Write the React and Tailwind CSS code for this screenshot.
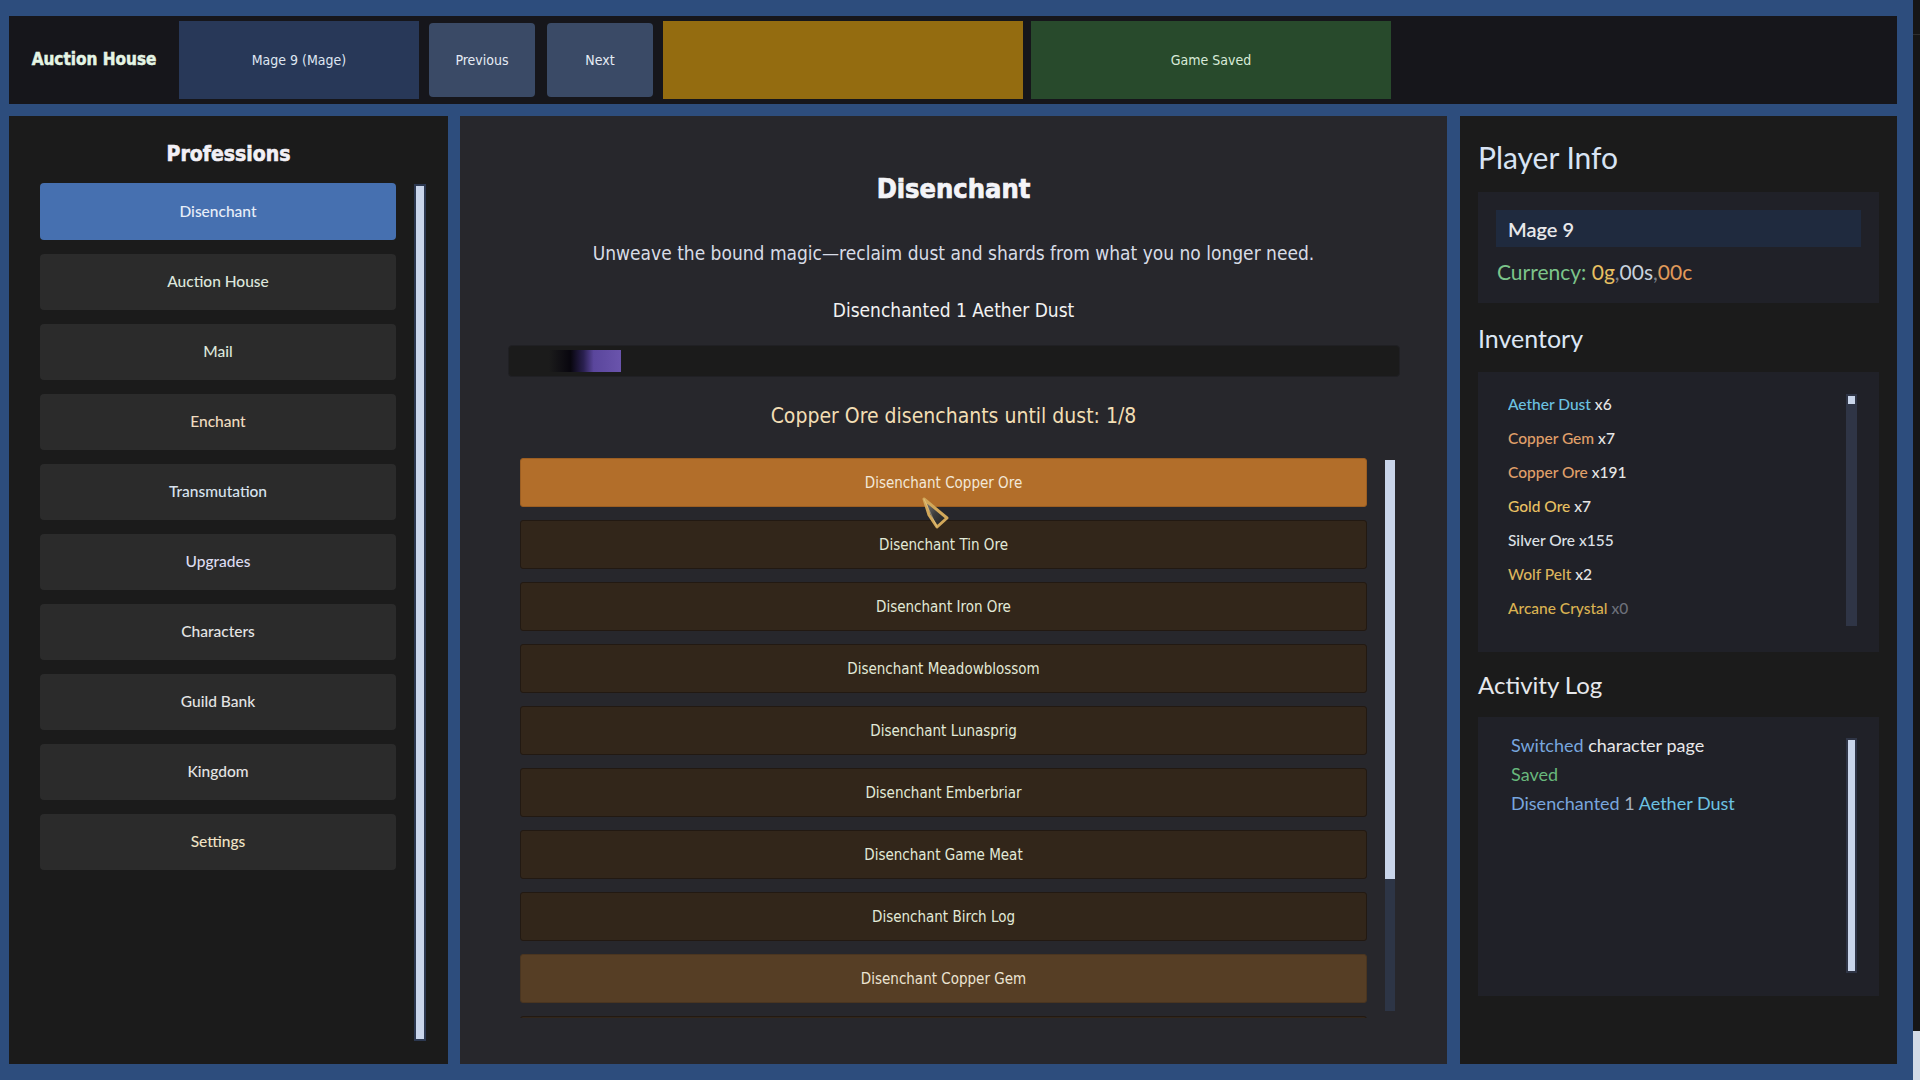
import React from "react";

const NARROW = "font-[family-name:'Liberation_Sans_Narrow','DejaVu_Sans_Condensed',sans-serif]";
const BODY = "font-[family-name:Lato,'Noto_Sans',sans-serif]";

const navItems = [
  ["Disenchant", "text-[#e8eef8]", true],
  ["Auction House", "text-[#dde6dc]"],
  ["Mail", "text-[#dce6da]"],
  ["Enchant", "text-[#f0dcc0]"],
  ["Transmutation", "text-[#d8e2ee]"],
  ["Upgrades", "text-[#dcdcf0]"],
  ["Characters", "text-[#e4e4e4]"],
  ["Guild Bank", "text-[#e4e4e4]"],
  ["Kingdom", "text-[#e4e4e4]"],
  ["Settings", "text-[#efe2c4]"],
];

const rows = [
  ["Disenchant Copper Ore", "active"],
  ["Disenchant Tin Ore"],
  ["Disenchant Iron Ore"],
  ["Disenchant Meadowblossom"],
  ["Disenchant Lunasprig"],
  ["Disenchant Emberbriar"],
  ["Disenchant Game Meat"],
  ["Disenchant Birch Log"],
  ["Disenchant Copper Gem", "gem"],
  ["", "hidden"],
];

const inventory = [
  ["Aether Dust", "text-[#6cc2e2]", "x6", "text-[#e6e6e6]"],
  ["Copper Gem", "text-[#e0a06a]", "x7", "text-[#e6e6e6]"],
  ["Copper Ore", "text-[#e0a06a]", "x191", "text-[#e6e6e6]"],
  ["Gold Ore", "text-[#e8c062]", "x7", "text-[#e6e6e6]"],
  ["Silver Ore", "text-[#dde0e6]", "x155", "text-[#dde0e6]"],
  ["Wolf Pelt", "text-[#dcb45c]", "x2", "text-[#e6e6e6]"],
  ["Arcane Crystal", "text-[#dab252]", "x0", "text-[#6c707a]"],
];

function Cursor() {
  return (
    <svg
      className="absolute left-[921px] top-[497px]"
      width="30"
      height="34"
      viewBox="0 0 30 34"
    >
      <defs>
        <linearGradient id="cg" x1="0" y1="0" x2="1" y2="1">
          <stop offset="0" stopColor="#8a8a8a" />
          <stop offset="0.5" stopColor="#3c3c3c" />
          <stop offset="1" stopColor="#1c1c1c" />
        </linearGradient>
      </defs>
      <polygon
        points="3,2 8,18 16,30 26,21"
        fill="url(#cg)"
        stroke="#d2a85a"
        strokeWidth="3"
        strokeLinejoin="round"
      />
      <polyline points="3,2 16,30" fill="none" stroke="#f4e0b0" strokeWidth="0.8" opacity="0.5" />
    </svg>
  );
}

export default function App() {
  return (
    <div className="relative flex w-[1920px] h-[1080px] overflow-hidden bg-[#2d4d7d]">
      <div className="flex flex-col w-[1913px] h-[1080px] pl-[9px] pt-[16px]">
        {/* Top bar */}
        <div className="flex items-center w-[1888px] h-[88px] bg-[#16161b]">
          <div className={`w-[170px] text-center text-[17px] font-bold text-[#e4f4e4] [-webkit-text-stroke:0.5px_#e4f4e4] ${NARROW}`}>
            Auction House
          </div>
          <div className={`flex items-center justify-center w-[240px] h-[78px] bg-[#283858] text-[14px] text-[#dfe6f2] ${NARROW}`}>
            Mage 9 (Mage)
          </div>
          <div className={`ml-[10px] flex items-center justify-center w-[106px] h-[74px] rounded-[4px] bg-[#3a4a66] text-[14px] text-[#e6ecf5] ${NARROW}`}>
            Previous
          </div>
          <div className={`ml-[12px] flex items-center justify-center w-[106px] h-[74px] rounded-[4px] bg-[#3a4a66] text-[14px] text-[#e6ecf5] ${NARROW}`}>
            Next
          </div>
          <div className="ml-[10px] w-[360px] h-[78px] bg-[#946c10]" />
          <div className={`ml-[8px] flex items-center justify-center w-[360px] h-[78px] bg-[#284a2c] text-[14px] text-[#d9ead9] ${NARROW}`}>
            Game Saved
          </div>
        </div>

        {/* Main */}
        <div className="flex mt-[12px] h-[948px]">
          {/* Left panel */}
          <div className="w-[439px] h-full bg-[#1b1b1b] pt-[24px]">
            <div className={`h-[28px] leading-[28px] text-center text-[21px] font-bold text-[#f2f0f6] [-webkit-text-stroke:0.6px_#f2f0f6] ${NARROW}`}>
              Professions
            </div>
            <div className="flex mt-[15px] pl-[31px]">
              <div className="flex flex-col gap-[14px] w-[356px]">
                {navItems.map(([label, color, active]) => (
                  <div
                    key={label}
                    className={`flex items-center justify-center ${active ? "h-[57px] bg-[#4670b0]" : "h-[56px] bg-[#2b2b2b]"} rounded-[4px] text-[15.5px] font-medium ${color} ${BODY}`}
                  >
                    {label}
                  </div>
                ))}
              </div>
              <div className="ml-[18px] mt-[1px] w-[12px] h-[857px] border-[2px] border-[#2c3850] bg-[#c9d5ea]" />
            </div>
          </div>

          {/* Middle panel */}
          <div className="ml-[12px] w-[987px] h-full bg-[#27272c] pt-[55px]">
            <div className={`h-[36px] leading-[36px] text-center text-[27px] font-bold text-[#f4f4f8] [-webkit-text-stroke:0.7px_#f4f4f8] ${NARROW}`}>
              Disenchant
            </div>
            <div className={`mt-[32px] h-[28px] leading-[28px] text-center text-[19px] text-[#d8dce6] ${NARROW}`}>
              Unweave the bound magic—reclaim dust and shards from what you no longer need.
            </div>
            <div className={`mt-[29px] h-[28px] leading-[28px] text-center text-[19px] text-[#f2f2f2] ${NARROW}`}>
              Disenchanted 1 Aether Dust
            </div>
            <div className="mt-[21px] ml-[48px] flex items-center w-[892px] h-[32px] rounded-[4px] bg-[#1b1b1b] border border-[#202024]">
              <div className="ml-[40px] w-[72px] h-[22px] bg-[linear-gradient(to_right,#1b1b1b_0%,#08060e_30%,#2a2050_48%,#5a469c_62%,#6a54ac_100%)]" />
            </div>
            <div className={`mt-[24px] h-[30px] leading-[30px] text-center text-[21px] text-[#f2deb4] ${NARROW}`}>
              Copper Ore disenchants until dust: 1/8
            </div>
            <div className="relative flex mt-[27px] pl-[60px]">
              <div className="flex flex-col gap-[13px] w-[847px] h-[560px] overflow-hidden">
                {rows.map(([label, kind], i) => (
                  <div
                    key={i}
                    className={`shrink-0 flex items-center justify-center h-[49px] pt-[2px] rounded-[3px] border text-[15px] ${NARROW} ${
                      kind === "active"
                        ? "bg-[#b26e2a] border-[#9c5e22] text-[#f2e8d8]"
                        : kind === "gem"
                        ? "bg-[#563e25] border-[#4a3520] text-[#ece4d2]"
                        : "bg-[#32261a] border-[#221912] text-[#e2ead8]"
                    }`}
                  >
                    {label}
                  </div>
                ))}
              </div>
              <div className="ml-[18px] mt-[2px] flex flex-col w-[10px] h-[551px] bg-[#2d3546]">
                <div className="w-[10px] h-[419px] bg-[#c9d5ea]" />
              </div>
            </div>
          </div>

          {/* Right panel */}
          <div className={`ml-[13px] w-[437px] h-full bg-[#1b1b1b] px-[18px] pt-[23px] ${BODY}`}>
            <div className="h-[36px] leading-[36px] text-[30px] text-[#d8e4f4]">Player Info</div>
            <div className="mt-[17px] w-[401px] h-[111px] bg-[#202128] px-[18px] pt-[18px]">
              <div className="h-[37px] bg-[#1f2a3e] pl-[12px] flex items-center text-[20px] font-semibold text-[#e8e8ea]">
                Mage 9
              </div>
              <div className="mt-[11px] h-[28px] leading-[28px] text-[21px] pl-[1px]">
                <span className="text-[#7cc48a]">Currency: </span>
                <span className="text-[#e8c062]">0g</span>
                <span className="text-[#7c828c]">,</span>
                <span className="text-[#c8d2de]">00s</span>
                <span className="text-[#7c828c]">,</span>
                <span className="text-[#e09a5a]">00c</span>
              </div>
            </div>

            <div className="mt-[20px] h-[30px] leading-[30px] text-[25px] text-[#dce6f4]">Inventory</div>
            <div className="mt-[19px] flex items-start w-[401px] h-[280px] bg-[#202128] pl-[30px] pt-[15px]">
              <div className="flex flex-col w-[338px] h-[239px] overflow-hidden">
                {inventory.map(([name, c, qty, qc]) => (
                  <div key={name} className="shrink-0 h-[34px] leading-[34px] text-[15.5px] font-medium">
                    <span className={c}>{name}</span> <span className={qc}>{qty}</span>
                  </div>
                ))}
              </div>
              <div className="mt-[7px] w-[11px] h-[232px] bg-[#2f3546] p-[2px]">
                <div className="w-[7px] h-[8px] bg-[#c9d5ea]" />
              </div>
            </div>

            <div className="mt-[18px] h-[30px] leading-[30px] text-[24px] text-[#e6e8ec]">Activity Log</div>
            <div className="mt-[17px] flex items-start w-[401px] h-[279px] bg-[#202128] pl-[33px] pt-[14px]">
              <div className="flex flex-col w-[335px] text-[18px]">
                <div className="h-[29px] leading-[29px]">
                  <span className="text-[#78a6de]">Switched</span>{" "}
                  <span className="text-[#e8e8ea]">character page</span>
                </div>
                <div className="h-[29px] leading-[29px] text-[#68b87c]">Saved</div>
                <div className="h-[29px] leading-[29px]">
                  <span className="text-[#78a6de]">Disenchanted</span>{" "}
                  <span className="text-[#a8b2c0]">1</span>{" "}
                  <span className="text-[#6cc2e2]">Aether Dust</span>
                </div>
              </div>
              <div className="mt-[7px] w-[11px] h-[235px] border-[2px] border-[#2f3546] bg-[#c9d5ea]" />
            </div>
          </div>
        </div>
      </div>

      {/* Edge strip */}
      <div className="flex flex-col w-[7px] h-[1080px] bg-[#161616]">
        <div className="mt-[34px] h-[1px] bg-[#2e2e2e]" />
        <div className="mt-auto h-[49px] bg-[#d2dae6]" />
      </div>

      <Cursor />
    </div>
  );
}
